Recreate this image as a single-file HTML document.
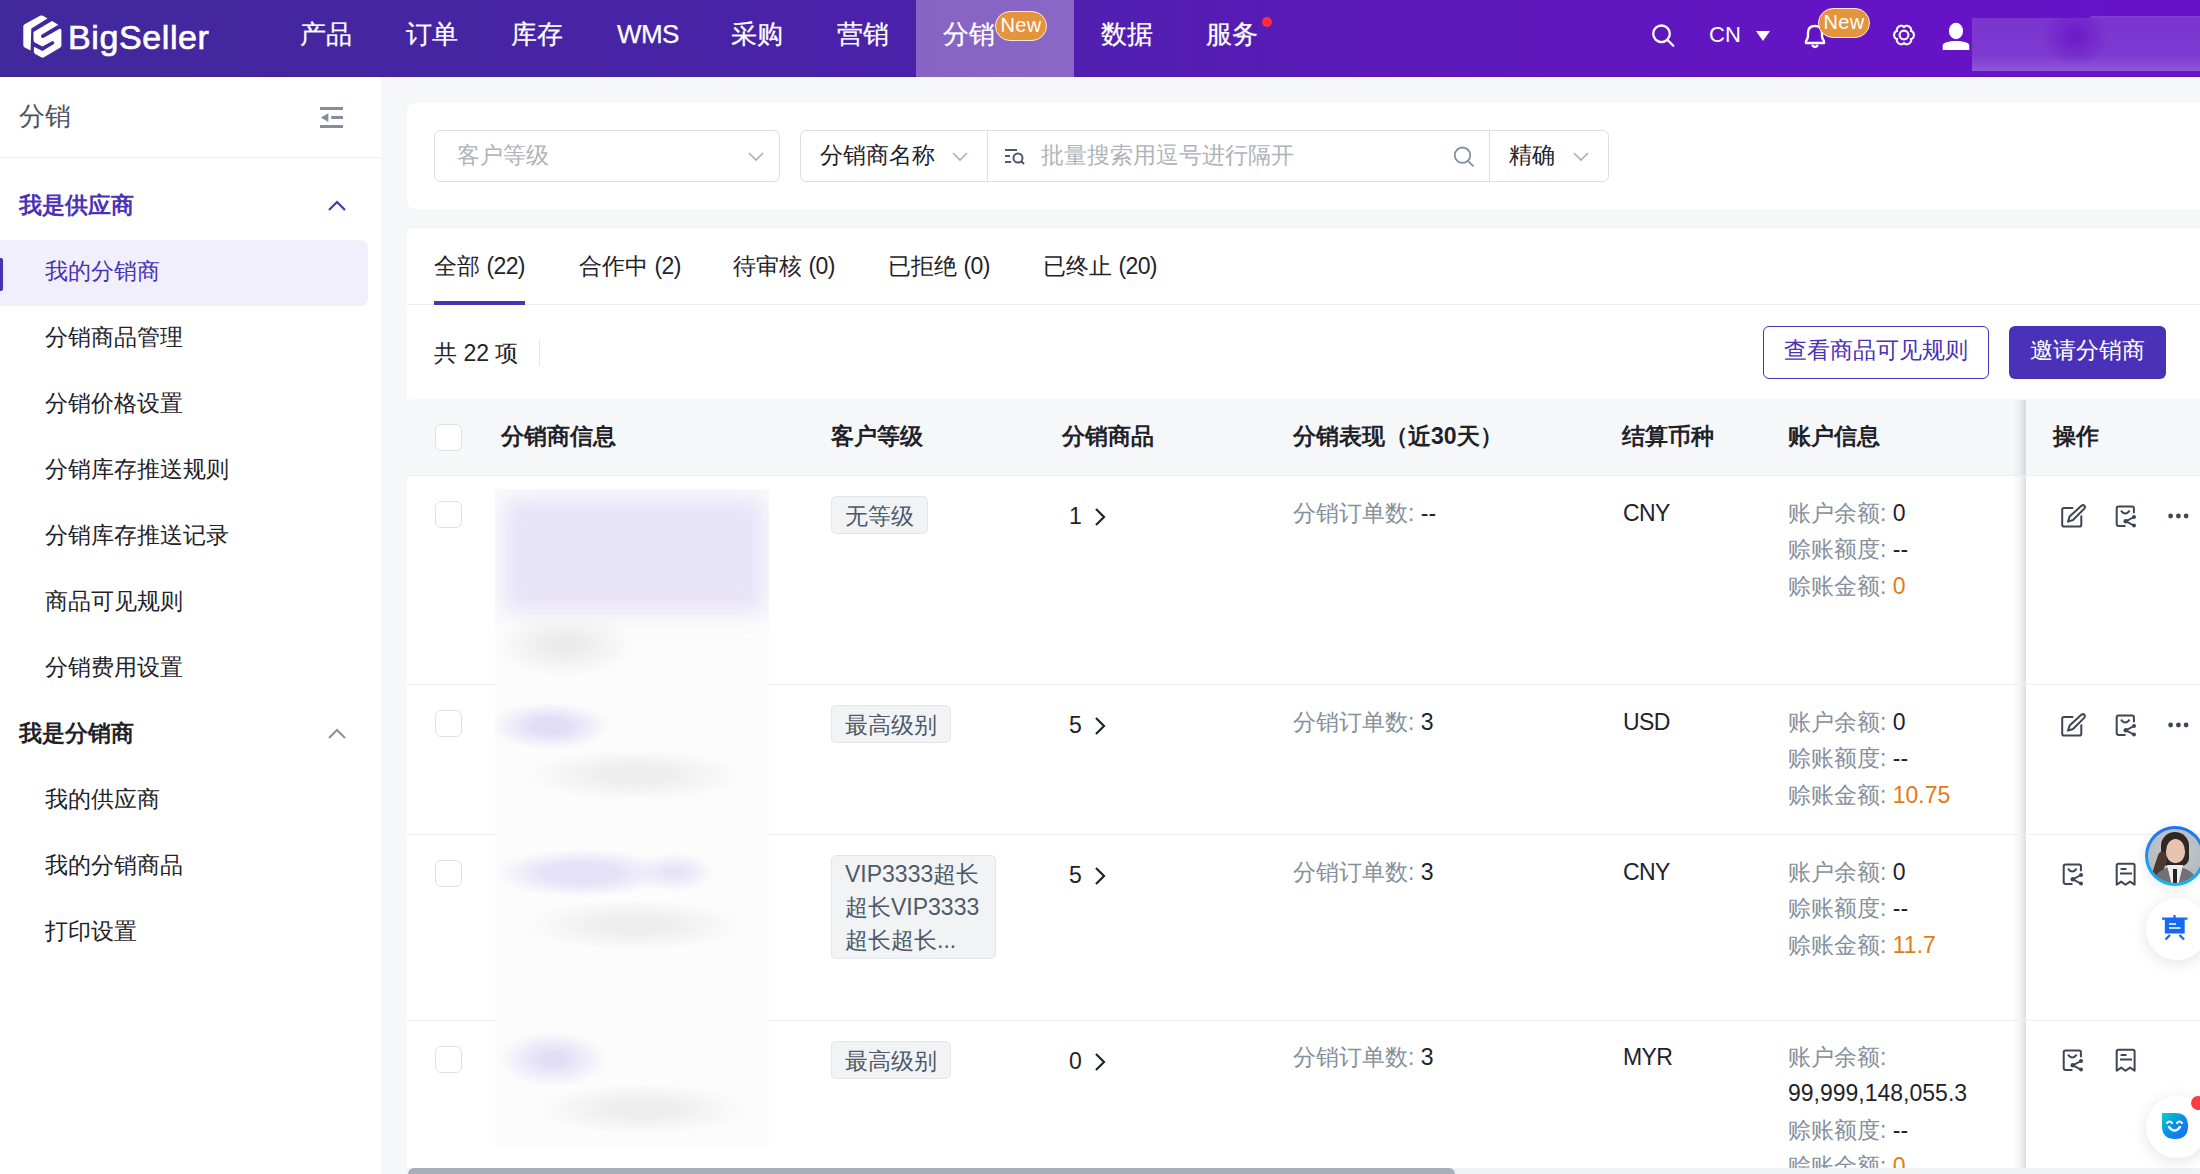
<!DOCTYPE html>
<html><head><meta charset="utf-8">
<style>
*{box-sizing:border-box;margin:0;padding:0}
html,body{width:2200px;height:1174px;overflow:hidden}
body{font-family:"Liberation Sans",sans-serif;background:#f6f7f9;color:#1f2329;position:relative}
.a{position:absolute;white-space:nowrap}
#hdr{position:absolute;left:0;top:0;width:2200px;height:77px;background:linear-gradient(90deg,#40299b 0%,#4b21aa 42%,#5b1ab9 62%,#6414c4 85%,#6812c8 100%);border-bottom:1px solid rgba(20,0,60,0.14)}
.nav{position:absolute;top:17px;font-size:26px;color:#fff;line-height:34px;-webkit-text-stroke:0.25px #fff}
.badge{position:absolute;background:#e3943c;color:#fff;border:1px solid #fbeedd;border-radius:15px;font-size:20px;line-height:27px;height:30px;width:52px;text-align:center;letter-spacing:0.3px}
#side{position:absolute;left:0;top:77px;width:381px;height:1097px;background:#fff}
.si{position:absolute;left:45px;font-size:23px;color:#1f2329;line-height:30px}
.sh{position:absolute;left:19px;font-size:23px;font-weight:bold;line-height:30px}
.card{position:absolute;background:#fff;border-radius:8px}
.inp{position:absolute;border:1px solid #dedfe6;border-radius:6px;background:#fff}
.ph{position:absolute;font-size:23px;color:#b0b3ba;line-height:30px}
.tab{position:absolute;top:251px;font-size:23px;color:#1f2329;line-height:30px}
.th{position:absolute;top:421px;font-size:23px;font-weight:bold;color:#1f2329;line-height:30px}
.cb{position:absolute;left:435px;width:27px;height:27px;border:1px solid #dfe1e7;border-radius:6px;background:#fff}
.tag{position:absolute;left:831px;background:#f2f3f5;border:1px solid #e3e5e8;border-radius:5px;font-size:23px;color:#4e5969;line-height:32px;padding:3px 13px 1px}
.txt{position:absolute;font-size:23px;line-height:30px;color:#1f2329}
.lbl{color:#86909c}
.or{color:#e37c14}
.la{letter-spacing:-0.6px}
.rowline{position:absolute;left:407px;width:1793px;height:1px;background:#eceef1}
</style></head><body>
<div id="hdr">
<svg class="a" style="left:18px;top:10px" width="50" height="52" viewBox="0 0 50 52">
<path d="M5.3 16.5 Q5.3 15 6.6 14.3 L22 5.8 Q23.5 5 25 5.8 L29.5 8.5 L13.3 18.6 L12.6 40.5 L6.6 37.4 Q5.3 36.6 5.3 35 Z" fill="#fff"/>
<path d="M15.5 22 L34 11 L40.3 14.8 L23.6 24.8 Q22.5 26 23.3 27.3 Q24.5 28.5 25.8 27.7 L41.6 18.8 Q43.4 18.5 43.4 20.5 L43.4 35.5 Q43.4 37 42 37.8 L26 47.3 Q24.6 48 23.2 47.3 L17.2 43.9 Q15.9 43.2 15.9 41.8 L15.9 36.8 L24.4 41 L35.5 34.3 Q37 33 36 31.8 Q35 30.8 33.6 31.6 L24.4 36.6 L16.8 32.4 Q15.5 31.8 15.5 30.3 Z" fill="#fff"/>
</svg>
<div class="a" style="left:68px;top:16.5px;font-size:34px;line-height:40px;color:#fff;letter-spacing:0.6px;-webkit-text-stroke:0.7px #fff">BigSeller</div>
<div class="nav" style="left:300px">产品</div>
<div class="nav" style="left:406px">订单</div>
<div class="nav" style="left:511px">库存</div>
<div class="nav" style="left:617px"><span style="letter-spacing:-0.6px">WMS</span></div>
<div class="nav" style="left:731px">采购</div>
<div class="nav" style="left:837px">营销</div>
<div class="a" style="left:916px;top:0;width:158px;height:77px;background:linear-gradient(90deg,#8764c4,#8a66c6)"></div>
<div class="nav" style="left:943px">分销</div>
<div class="badge" style="left:995px;top:11px">New</div>
<div class="nav" style="left:1101px">数据</div>
<div class="nav" style="left:1206px">服务</div>
<div class="a" style="left:1262px;top:17px;width:10px;height:10px;border-radius:50%;background:#ff2d3d"></div>
<svg class="a" style="left:1650px;top:22px" width="28" height="28" viewBox="0 0 28 28"><circle cx="11.5" cy="11.8" r="8.3" fill="none" stroke="#fff" stroke-width="2.3"/><path d="M17.8 18.2 L23.3 23.7" stroke="#fff" stroke-width="2.3" stroke-linecap="round"/></svg>
<div class="nav" style="left:1709px;font-size:22px;top:18px;-webkit-text-stroke:0">CN</div>
<svg class="a" style="left:1755px;top:30px" width="16" height="12" viewBox="0 0 16 12"><path d="M1 1 L15 1 L8 11 Z" fill="#fff"/></svg>
<svg class="a" style="left:1801px;top:22px" width="28" height="28" viewBox="0 0 28 28"><path d="M5 21 L5 19 Q7 17 7 14 L7 11 Q7 4 14 4 Q21 4 21 11 L21 14 Q21 17 23 19 L23 21 Z" fill="none" stroke="#fff" stroke-width="2.4" stroke-linejoin="round"/><path d="M11 23 Q14 27 17 23" fill="none" stroke="#fff" stroke-width="2.4"/></svg>
<div class="badge" style="left:1818px;top:8px">New</div>
<svg class="a" style="left:1889.5px;top:22.2px" width="28" height="26" viewBox="0 0 28 26"><path d="M23.90 13.00 L23.87 13.52 L23.79 14.03 L23.65 14.53 L23.45 15.01 L23.20 15.47 L22.90 15.89 L22.54 16.28 L22.12 16.62 L21.62 16.88 L20.84 16.95 L21.18 17.66 L21.19 18.22 L21.11 18.76 L20.95 19.26 L20.73 19.73 L20.46 20.18 L20.15 20.59 L19.78 20.96 L19.38 21.29 L18.95 21.57 L18.49 21.81 L18.00 21.99 L17.50 22.12 L16.99 22.19 L16.47 22.20 L15.94 22.15 L15.43 22.03 L14.93 21.84 L14.45 21.55 L14.00 20.90 L13.55 21.55 L13.07 21.84 L12.57 22.03 L12.06 22.15 L11.53 22.20 L11.01 22.19 L10.50 22.12 L10.00 21.99 L9.51 21.81 L9.05 21.57 L8.62 21.29 L8.22 20.96 L7.85 20.59 L7.54 20.18 L7.27 19.73 L7.05 19.26 L6.89 18.76 L6.81 18.22 L6.82 17.66 L7.16 16.95 L6.38 16.88 L5.88 16.62 L5.46 16.28 L5.10 15.89 L4.80 15.47 L4.55 15.01 L4.35 14.53 L4.21 14.03 L4.13 13.52 L4.10 13.00 L4.13 12.48 L4.21 11.97 L4.35 11.47 L4.55 10.99 L4.80 10.53 L5.10 10.11 L5.46 9.72 L5.88 9.38 L6.38 9.12 L7.16 9.05 L6.82 8.34 L6.81 7.78 L6.89 7.24 L7.05 6.74 L7.27 6.27 L7.54 5.82 L7.85 5.41 L8.22 5.04 L8.62 4.71 L9.05 4.43 L9.51 4.19 L10.00 4.01 L10.50 3.88 L11.01 3.81 L11.53 3.80 L12.06 3.85 L12.57 3.97 L13.07 4.16 L13.55 4.45 L14.00 5.10 L14.45 4.45 L14.93 4.16 L15.43 3.97 L15.94 3.85 L16.47 3.80 L16.99 3.81 L17.50 3.88 L18.00 4.01 L18.49 4.19 L18.95 4.43 L19.38 4.71 L19.78 5.04 L20.15 5.41 L20.46 5.82 L20.73 6.27 L20.95 6.74 L21.11 7.24 L21.19 7.78 L21.18 8.34 L20.84 9.05 L21.62 9.12 L22.12 9.38 L22.54 9.72 L22.90 10.11 L23.20 10.53 L23.45 10.99 L23.65 11.47 L23.79 11.97 L23.87 12.48 L23.90 13.00 Z" fill="none" stroke="#fff" stroke-width="2.1" stroke-linejoin="round"/><circle cx="14" cy="13" r="4.4" fill="none" stroke="#fff" stroke-width="2.1"/></svg>
<svg class="a" style="left:1942px;top:22px" width="28" height="29" viewBox="0 0 28 29"><ellipse cx="14" cy="9" rx="7.1" ry="8.2" fill="#fff"/><path d="M0.7 28 L0.7 23.5 C0.7 20.5 7 19 14 19 C21 19 27.3 20.5 27.3 23.5 L27.3 28 Z" fill="#fff"/></svg>
<div class="a" style="left:2089px;top:16px;width:111px;height:10px;border-radius:4px 0 0 0;background:#7e3dd1"></div>
<div class="a" style="left:1972px;top:18px;width:228px;height:53px;background:radial-gradient(ellipse 34px 30px at 103px 18px,#6e18c8 0%,rgba(120,50,208,0) 100%),linear-gradient(180deg,#7a36cf 0%,#7c3ad0 70%,#9256da 100%)"></div>
</div>
<div id="side">
<div class="a" style="left:19px;top:22px;font-size:26px;color:#4b5260;line-height:34px">分销</div>
<svg class="a" style="left:320px;top:29px" width="26" height="24" viewBox="0 0 26 24"><path d="M0 2.5 L23 2.5 M11.2 11.5 L23 11.5 M0 20.5 L23 20.5" stroke="#858d98" stroke-width="2.8"/><path d="M0.8 11.6 L8.4 7.2 L8.4 16 Z" fill="#858d98"/></svg>
<div class="a" style="left:0;top:80px;width:381px;height:1px;background:#eceef1"></div>
<div class="sh" style="top:113px;color:#4a32b8">我是供应商</div>
<svg class="a" style="left:327px;top:123px" width="20" height="12" viewBox="0 0 20 12"><path d="M2 10 L10 2 L18 10" fill="none" stroke="#4a32b8" stroke-width="2.2"/></svg>
<div class="a" style="left:0;top:163px;width:368px;height:66px;background:#f2effc;border-radius:0 7px 7px 0"></div>
<div class="a" style="left:0;top:181px;width:3px;height:33px;background:#4a32b8;border-radius:0 2px 2px 0"></div>
<div class="si" style="top:179px;color:#4a32b8">我的分销商</div>
<div class="si" style="top:245px">分销商品管理</div>
<div class="si" style="top:311px">分销价格设置</div>
<div class="si" style="top:377px">分销库存推送规则</div>
<div class="si" style="top:443px">分销库存推送记录</div>
<div class="si" style="top:509px">商品可见规则</div>
<div class="si" style="top:575px">分销费用设置</div>
<div class="sh" style="top:641px;color:#1f2329">我是分销商</div>
<svg class="a" style="left:327px;top:651px" width="20" height="12" viewBox="0 0 20 12"><path d="M2 10 L10 2 L18 10" fill="none" stroke="#8a9099" stroke-width="2"/></svg>
<div class="si" style="top:707px">我的供应商</div>
<div class="si" style="top:773px">我的分销商品</div>
<div class="si" style="top:839px">打印设置</div>
</div>
<div class="card" style="left:407px;top:103px;width:1800px;height:106px"></div>
<div class="inp" style="left:434px;top:130px;width:346px;height:52px"></div>
<div class="ph" style="left:457px;top:140px">客户等级</div>
<svg class="a" style="left:746px;top:151px" width="20" height="12" viewBox="0 0 20 12"><path d="M3 2 L10 9 L17 2" fill="none" stroke="#a9aeb8" stroke-width="1.6"/></svg>
<div class="inp" style="left:800px;top:130px;width:809px;height:52px"></div>
<div class="txt" style="left:820px;top:140px">分销商名称</div>
<svg class="a" style="left:950px;top:151px" width="20" height="12" viewBox="0 0 20 12"><path d="M3 2 L10 9 L17 2" fill="none" stroke="#a9aeb8" stroke-width="1.6"/></svg>
<div class="a" style="left:987px;top:131px;width:1px;height:50px;background:#dedfe6"></div>
<svg class="a" style="left:1003px;top:146px" width="24" height="20" viewBox="0 0 24 20"><path d="M2 4 L14 4 M2 10 L7 10 M2 16 L8 16" stroke="#4e5969" stroke-width="2"/><circle cx="15" cy="12" r="4.5" fill="none" stroke="#4e5969" stroke-width="2"/><path d="M18 15 L21 18" stroke="#4e5969" stroke-width="2"/></svg>
<div class="ph" style="left:1041px;top:140px">批量搜索用逗号进行隔开</div>
<svg class="a" style="left:1450px;top:143px" width="28" height="28" viewBox="0 0 28 28"><circle cx="12.5" cy="12.2" r="7.7" fill="none" stroke="#86909c" stroke-width="1.8"/><path d="M18 17.8 L23 22.8" stroke="#86909c" stroke-width="1.8" stroke-linecap="round"/></svg>
<div class="a" style="left:1489px;top:131px;width:1px;height:50px;background:#dedfe6"></div>
<div class="txt" style="left:1509px;top:140px">精确</div>
<svg class="a" style="left:1571px;top:151px" width="20" height="12" viewBox="0 0 20 12"><path d="M3 2 L10 9 L17 2" fill="none" stroke="#a9aeb8" stroke-width="1.6"/></svg>
<div class="a" style="left:407px;top:229px;width:1800px;height:1000px;background:#fff;border-radius:0"></div>
<div class="tab" style="left:434px">全部 <span class="la">(22)</span></div>
<div class="tab" style="left:579px">合作中 <span class="la">(2)</span></div>
<div class="tab" style="left:733px">待审核 <span class="la">(0)</span></div>
<div class="tab" style="left:888px">已拒绝 <span class="la">(0)</span></div>
<div class="tab" style="left:1043px">已终止 <span class="la">(20)</span></div>
<div class="a" style="left:407px;top:304px;width:1793px;height:1px;background:#eceef1"></div>
<div class="a" style="left:434px;top:301px;width:91px;height:4px;background:#4a32b8"></div>
<div class="txt" style="left:434px;top:338px">共 22 项</div>
<div class="a" style="left:539px;top:340px;width:1px;height:26px;background:#e5e6eb"></div>
<div class="a" style="left:1763px;top:326px;width:226px;height:53px;border:1.5px solid #4a32b8;border-radius:6px;background:#fff"></div>
<div class="txt" style="left:1784px;top:335px;color:#4a32b8">查看商品可见规则</div>
<div class="a" style="left:2009px;top:326px;width:157px;height:53px;border-radius:6px;background:#4a32b8"></div>
<div class="txt" style="left:2030px;top:335px;color:#fff">邀请分销商</div>
<div class="a" style="left:407px;top:399px;width:1793px;height:76px;background:#f6f7f9;border-radius:6px 0 0 0"></div>
<div class="cb" style="top:424px"></div>
<div class="th" style="left:501px">分销商信息</div>
<div class="th" style="left:831px">客户等级</div>
<div class="th" style="left:1062px">分销商品</div>
<div class="th" style="left:1293px">分销表现（近30天）</div>
<div class="th" style="left:1622px">结算币种</div>
<div class="th" style="left:1788px">账户信息</div>
<div class="a" style="left:2012px;top:400px;width:14px;height:768px;background:linear-gradient(90deg,rgba(0,0,0,0) 0%,rgba(0,0,0,0.03) 50%,rgba(0,0,0,0.13) 100%)"></div>
<div class="a" style="left:2026px;top:400px;width:174px;height:774px;background:#fff"></div>
<div class="a" style="left:2026px;top:399px;width:174px;height:76px;background:#f6f7f9"></div>
<div class="th" style="left:2053px">操作</div>
<div class="rowline" style="top:475px"></div>
<div class="rowline" style="top:684px"></div>
<div class="rowline" style="top:834px"></div>
<div class="rowline" style="top:1020px"></div>
<div class="a" style="left:495px;top:489px;width:274px;height:659px;background:#fcfcfc;overflow:hidden"><div class="a" style="left:-495px;top:-489px;width:2200px;height:1174px">
<div class="a" style="left:503px;top:497px;width:262px;height:116px;background:#e7e3f8;filter:blur(11px)"></div>
<div class="a" style="left:495px;top:613px;width:140px;height:64px;background:radial-gradient(closest-side,#ebebec 20%,rgba(255,255,255,0) 100%)"></div>
<div class="a" style="left:490px;top:702px;width:120px;height:48px;background:radial-gradient(closest-side,#e2ddf7 30%,rgba(255,255,255,0) 100%)"></div>
<div class="a" style="left:525px;top:749px;width:220px;height:52px;background:radial-gradient(closest-side,#eeeeef 30%,rgba(255,255,255,0) 100%)"></div>
<div class="a" style="left:494px;top:849px;width:176px;height:48px;background:radial-gradient(closest-side,#e5e1f8 40%,rgba(255,255,255,0) 100%)"></div>
<div class="a" style="left:635px;top:852px;width:80px;height:40px;background:radial-gradient(closest-side,#e8e4f8 20%,rgba(255,255,255,0) 100%)"></div>
<div class="a" style="left:525px;top:899px;width:220px;height:52px;background:radial-gradient(closest-side,#eeeeef 30%,rgba(255,255,255,0) 100%)"></div>
<div class="a" style="left:498px;top:1031px;width:110px;height:56px;background:radial-gradient(closest-side,#e2ddf7 20%,rgba(255,255,255,0) 100%)"></div>
<div class="a" style="left:537px;top:1083px;width:210px;height:52px;background:radial-gradient(closest-side,#eeeeef 30%,rgba(255,255,255,0) 100%)"></div>
</div></div>
<div class="cb" style="top:501px"></div>
<div class="tag" style="top:496px">无等级</div>
<div class="txt" style="left:1069px;top:501px">1</div>
<svg class="a" style="left:1093px;top:507px" width="14" height="20" viewBox="0 0 14 20"><path d="M3 2 L11 10 L3 18" fill="none" stroke="#1f2329" stroke-width="2.2"/></svg>
<div class="txt" style="left:1293px;top:498px"><span class="lbl">分销订单数:</span> --</div>
<div class="txt la" style="left:1623px;top:498px">CNY</div>
<div class="txt" style="left:1788px;top:498px"><span class="lbl">账户余额:</span> 0</div>
<div class="txt" style="left:1788px;top:534.3px"><span class="lbl">赊账额度:</span> --</div>
<div class="txt" style="left:1788px;top:570.5999999999999px"><span class="lbl">赊账金额:</span> <span class="or">0</span></div>
<div class="cb" style="top:710px"></div>
<div class="tag" style="top:705px">最高级别</div>
<div class="txt" style="left:1069px;top:710px">5</div>
<svg class="a" style="left:1093px;top:716px" width="14" height="20" viewBox="0 0 14 20"><path d="M3 2 L11 10 L3 18" fill="none" stroke="#1f2329" stroke-width="2.2"/></svg>
<div class="txt" style="left:1293px;top:707px"><span class="lbl">分销订单数:</span> 3</div>
<div class="txt la" style="left:1623px;top:707px">USD</div>
<div class="txt" style="left:1788px;top:707px"><span class="lbl">账户余额:</span> 0</div>
<div class="txt" style="left:1788px;top:743.3px"><span class="lbl">赊账额度:</span> --</div>
<div class="txt" style="left:1788px;top:779.5999999999999px"><span class="lbl">赊账金额:</span> <span class="or">10.75</span></div>
<div class="cb" style="top:860px"></div>
<div class="tag" style="top:855px;width:165px;line-height:33px;padding:2px 13px 1px">VIP3333超长<br>超长VIP3333<br>超长超长...</div>
<div class="txt" style="left:1069px;top:860px">5</div>
<svg class="a" style="left:1093px;top:866px" width="14" height="20" viewBox="0 0 14 20"><path d="M3 2 L11 10 L3 18" fill="none" stroke="#1f2329" stroke-width="2.2"/></svg>
<div class="txt" style="left:1293px;top:857px"><span class="lbl">分销订单数:</span> 3</div>
<div class="txt la" style="left:1623px;top:857px">CNY</div>
<div class="txt" style="left:1788px;top:857px"><span class="lbl">账户余额:</span> 0</div>
<div class="txt" style="left:1788px;top:893.3px"><span class="lbl">赊账额度:</span> --</div>
<div class="txt" style="left:1788px;top:929.5999999999999px"><span class="lbl">赊账金额:</span> <span class="or">11.7</span></div>
<div class="cb" style="top:1046px"></div>
<div class="tag" style="top:1041px">最高级别</div>
<div class="txt" style="left:1069px;top:1046px">0</div>
<svg class="a" style="left:1093px;top:1052px" width="14" height="20" viewBox="0 0 14 20"><path d="M3 2 L11 10 L3 18" fill="none" stroke="#1f2329" stroke-width="2.2"/></svg>
<div class="txt" style="left:1293px;top:1042px"><span class="lbl">分销订单数:</span> 3</div>
<div class="txt la" style="left:1623px;top:1042px">MYR</div>
<div class="txt" style="left:1788px;top:1042px"><span class="lbl">账户余额:</span></div>
<div class="txt" style="left:1788px;top:1078.3px">99,999,148,055.3</div>
<div class="txt" style="left:1788px;top:1114.6px"><span class="lbl">赊账额度:</span> --</div>
<div class="txt" style="left:1788px;top:1150.8999999999999px"><span class="lbl">赊账金额:</span> <span class="or">0</span></div>
<svg class="a" style="left:2058px;top:503px" width="30" height="28" viewBox="0 0 30 28"><path d="M14.5 4.9 L6 4.9 Q4.2 4.9 4.2 6.7 L4.2 21.8 Q4.2 23.6 6 23.6 L21.5 23.6 Q23.3 23.6 23.3 21.8 L23.3 13.3" fill="none" stroke="#3d4652" stroke-width="2" stroke-linecap="round"/><path d="M23.6 2.6 Q25.2 1.6 26.4 2.8 Q27.5 4 26.4 5.6 L15 17 L10 18.6 L11.6 13.6 Z" fill="none" stroke="#3d4652" stroke-width="2" stroke-linejoin="round"/></svg>
<svg class="a" style="left:2112px;top:503px" width="28" height="28" viewBox="0 0 28 28"><path d="M12.7 22.9 L6.5 22.9 Q4.7 22.9 4.7 21.1 L4.7 5.2 Q4.7 3.4 6.5 3.4 L20.1 3.4 Q21.9 3.4 21.9 5.2 L21.9 9.5" fill="none" stroke="#3d4652" stroke-width="2" stroke-linecap="round"/><path d="M9 7.6 Q13.3 13.6 17.6 7.6" fill="none" stroke="#3d4652" stroke-width="2"/><path d="M22 14 L13.8 18.3 L22 22.6" fill="none" stroke="#3d4652" stroke-width="1.9"/><circle cx="22" cy="14" r="2" fill="#3d4652"/><circle cx="13.8" cy="18.3" r="2.3" fill="#3d4652"/><circle cx="22" cy="22.6" r="2" fill="#3d4652"/></svg>
<svg class="a" style="left:2166px;top:511px" width="26" height="10" viewBox="0 0 26 10"><circle cx="4.6" cy="5" r="2.4" fill="#3d4652"/><circle cx="12.4" cy="5" r="2.4" fill="#3d4652"/><circle cx="20.1" cy="5" r="2.4" fill="#3d4652"/></svg>
<svg class="a" style="left:2058px;top:712px" width="30" height="28" viewBox="0 0 30 28"><path d="M14.5 4.9 L6 4.9 Q4.2 4.9 4.2 6.7 L4.2 21.8 Q4.2 23.6 6 23.6 L21.5 23.6 Q23.3 23.6 23.3 21.8 L23.3 13.3" fill="none" stroke="#3d4652" stroke-width="2" stroke-linecap="round"/><path d="M23.6 2.6 Q25.2 1.6 26.4 2.8 Q27.5 4 26.4 5.6 L15 17 L10 18.6 L11.6 13.6 Z" fill="none" stroke="#3d4652" stroke-width="2" stroke-linejoin="round"/></svg>
<svg class="a" style="left:2112px;top:712px" width="28" height="28" viewBox="0 0 28 28"><path d="M12.7 22.9 L6.5 22.9 Q4.7 22.9 4.7 21.1 L4.7 5.2 Q4.7 3.4 6.5 3.4 L20.1 3.4 Q21.9 3.4 21.9 5.2 L21.9 9.5" fill="none" stroke="#3d4652" stroke-width="2" stroke-linecap="round"/><path d="M9 7.6 Q13.3 13.6 17.6 7.6" fill="none" stroke="#3d4652" stroke-width="2"/><path d="M22 14 L13.8 18.3 L22 22.6" fill="none" stroke="#3d4652" stroke-width="1.9"/><circle cx="22" cy="14" r="2" fill="#3d4652"/><circle cx="13.8" cy="18.3" r="2.3" fill="#3d4652"/><circle cx="22" cy="22.6" r="2" fill="#3d4652"/></svg>
<svg class="a" style="left:2166px;top:720px" width="26" height="10" viewBox="0 0 26 10"><circle cx="4.6" cy="5" r="2.4" fill="#3d4652"/><circle cx="12.4" cy="5" r="2.4" fill="#3d4652"/><circle cx="20.1" cy="5" r="2.4" fill="#3d4652"/></svg>
<svg class="a" style="left:2059px;top:861px" width="28" height="28" viewBox="0 0 28 28"><path d="M12.7 22.9 L6.5 22.9 Q4.7 22.9 4.7 21.1 L4.7 5.2 Q4.7 3.4 6.5 3.4 L20.1 3.4 Q21.9 3.4 21.9 5.2 L21.9 9.5" fill="none" stroke="#3d4652" stroke-width="2" stroke-linecap="round"/><path d="M9 7.6 Q13.3 13.6 17.6 7.6" fill="none" stroke="#3d4652" stroke-width="2"/><path d="M22 14 L13.8 18.3 L22 22.6" fill="none" stroke="#3d4652" stroke-width="1.9"/><circle cx="22" cy="14" r="2" fill="#3d4652"/><circle cx="13.8" cy="18.3" r="2.3" fill="#3d4652"/><circle cx="22" cy="22.6" r="2" fill="#3d4652"/></svg>
<svg class="a" style="left:2112px;top:861px" width="28" height="28" viewBox="0 0 28 28"><path d="M4.7 23.7 L4.7 4.6 Q4.7 2.8 6.5 2.8 L20.8 2.8 Q22.6 2.8 22.6 4.6 L22.6 23.7 L18 20.6 L13.5 23.7 L9.2 20.6 Z" fill="none" stroke="#3d4652" stroke-width="2" stroke-linejoin="round"/><path d="M8.6 7.9 L14.5 7.9 M8 12.6 L20 12.6" stroke="#3d4652" stroke-width="2"/></svg>
<svg class="a" style="left:2059px;top:1047px" width="28" height="28" viewBox="0 0 28 28"><path d="M12.7 22.9 L6.5 22.9 Q4.7 22.9 4.7 21.1 L4.7 5.2 Q4.7 3.4 6.5 3.4 L20.1 3.4 Q21.9 3.4 21.9 5.2 L21.9 9.5" fill="none" stroke="#3d4652" stroke-width="2" stroke-linecap="round"/><path d="M9 7.6 Q13.3 13.6 17.6 7.6" fill="none" stroke="#3d4652" stroke-width="2"/><path d="M22 14 L13.8 18.3 L22 22.6" fill="none" stroke="#3d4652" stroke-width="1.9"/><circle cx="22" cy="14" r="2" fill="#3d4652"/><circle cx="13.8" cy="18.3" r="2.3" fill="#3d4652"/><circle cx="22" cy="22.6" r="2" fill="#3d4652"/></svg>
<svg class="a" style="left:2112px;top:1047px" width="28" height="28" viewBox="0 0 28 28"><path d="M4.7 23.7 L4.7 4.6 Q4.7 2.8 6.5 2.8 L20.8 2.8 Q22.6 2.8 22.6 4.6 L22.6 23.7 L18 20.6 L13.5 23.7 L9.2 20.6 Z" fill="none" stroke="#3d4652" stroke-width="2" stroke-linejoin="round"/><path d="M8.6 7.9 L14.5 7.9 M8 12.6 L20 12.6" stroke="#3d4652" stroke-width="2"/></svg>
<div class="a" style="left:407px;top:1168px;width:1793px;height:6px;background:#f0f1f3"></div>
<div class="a" style="left:408px;top:1168px;width:1047px;height:12px;background:#a9adb6;border-radius:6px"></div>
<div class="a" style="left:2145px;top:826px;width:60px;height:60px;border-radius:50%;background:linear-gradient(180deg,#1f6ff0,#12b9f2);box-shadow:0 2px 12px rgba(0,0,0,0.10)"></div>
<div class="a" style="left:2148px;top:829px;width:54px;height:54px;border-radius:50%;overflow:hidden;background:radial-gradient(circle at 50% 40%,#c6cacf 0,#b6bbc1 70%,#a2a7ad 100%)">
  <div class="a" style="left:13px;top:3px;width:28px;height:34px;border-radius:14px 14px 8px 8px;background:#2e2723"></div>
  <div class="a" style="left:7px;top:22px;width:10px;height:28px;border-radius:6px;background:#4a3a30;transform:rotate(18deg)"></div>
  <div class="a" style="left:18px;top:10px;width:19px;height:24px;border-radius:50% 50% 45% 45%;background:#e6c4b0"></div>
  <div class="a" style="left:3px;top:38px;width:48px;height:30px;border-radius:22px 22px 0 0;background:#707075"></div>
  <div class="a" style="left:19px;top:36px;width:16px;height:20px;background:#eeeeee;clip-path:polygon(0 0,100% 0,70% 100%,30% 100%)"></div>
  <div class="a" style="left:25px;top:40px;width:4px;height:14px;background:#222"></div>
</div>
<div class="a" style="left:2146px;top:898px;width:62px;height:62px;border-radius:50%;background:#fff;box-shadow:0 3px 16px rgba(0,0,0,0.11)"></div>
<svg class="a" style="left:2160px;top:914px" width="30" height="28" viewBox="0 0 30 28"><path d="M14.5 1 L14.5 4" stroke="#1668f0" stroke-width="2.2"/><path d="M2 3.6 L27.5 3.6 L27.5 5.8 L24.7 5.8 L24.7 19.5 L4.8 19.5 L4.8 5.8 L2 5.8 Z" fill="#1668f0"/><path d="M9 10 L16 10 M9 14 L20.5 14" stroke="#fff" stroke-width="1.7"/><path d="M5.5 25.5 L10 21 M24 25.5 L19.5 21" stroke="#1668f0" stroke-width="2.4"/></svg>
<div class="a" style="left:2146px;top:1096px;width:62px;height:62px;border-radius:50%;background:#fff;box-shadow:0 3px 16px rgba(0,0,0,0.11)"></div>
<svg class="a" style="left:2161px;top:1112px" width="28" height="28" viewBox="0 0 28 28"><defs><linearGradient id="sg" x1="0" y1="0" x2="1" y2="1"><stop offset="0" stop-color="#00d2c8"/><stop offset="0.5" stop-color="#0a8ee8"/><stop offset="1" stop-color="#1a6cf5"/></linearGradient></defs><path d="M1 1 L14 1 Q27 1 27 14 Q27 27 14 27 Q1 27 1 14 Z" fill="url(#sg)"/><path d="M6 11 Q8.5 8 11 11 M16 11 Q18.5 8 21 11" fill="none" stroke="#fff" stroke-width="2" stroke-linecap="round"/><path d="M8 15 Q13.5 22 19 15" fill="none" stroke="#fff" stroke-width="2.4" stroke-linecap="round"/></svg>
<div class="a" style="left:2191px;top:1096px;width:14px;height:14px;border-radius:50%;background:#ff3b3b"></div>

</body></html>
